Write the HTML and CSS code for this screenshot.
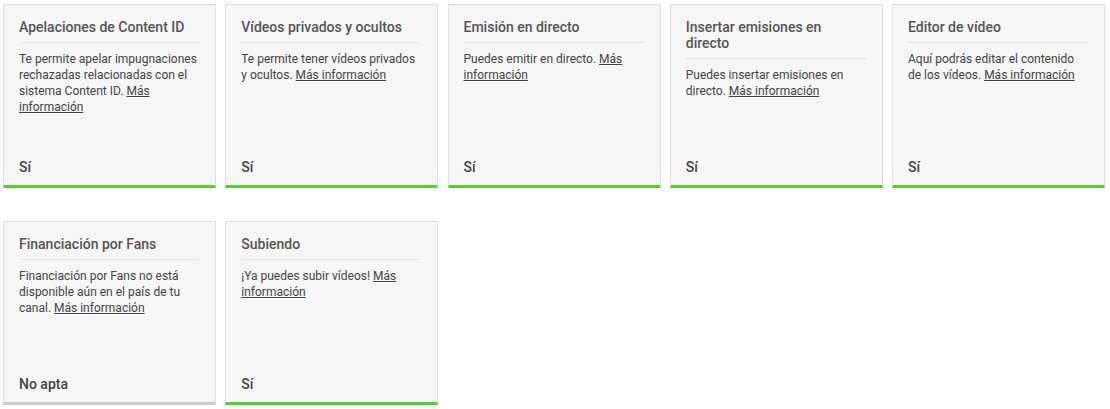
FILE: index.html
```html
<!DOCTYPE html>
<html lang="es">
<head>
<meta charset="utf-8">
<link rel="stylesheet" href="styles.css">
</head>
<body>
<div class="grid">
  <div class="card ok">
    <div class="title">Apelaciones de Content ID</div>
    <div class="desc">Te permite apelar impugnaciones rechazadas relacionadas con el sistema Content ID. <a href="#">Más información</a></div>
    <div class="status">Sí</div>
  </div>
  <div class="card ok">
    <div class="title">Vídeos privados y ocultos</div>
    <div class="desc">Te permite tener vídeos privados y ocultos. <a href="#">Más información</a></div>
    <div class="status">Sí</div>
  </div>
  <div class="card ok">
    <div class="title">Emisión en directo</div>
    <div class="desc">Puedes emitir en directo. <a href="#">Más información</a></div>
    <div class="status">Sí</div>
  </div>
  <div class="card ok">
    <div class="title">Insertar emisiones en directo</div>
    <div class="desc">Puedes insertar emisiones en directo. <a href="#">Más información</a></div>
    <div class="status">Sí</div>
  </div>
  <div class="card ok">
    <div class="title">Editor de vídeo</div>
    <div class="desc">Aquí podrás editar el contenido de los vídeos. <a href="#">Más información</a></div>
    <div class="status">Sí</div>
  </div>
  <div class="card no">
    <div class="title">Financiación por Fans</div>
    <div class="desc">Financiación por Fans no está disponible aún en el país de tu canal. <a href="#">Más información</a></div>
    <div class="status">No apta</div>
  </div>
  <div class="card ok">
    <div class="title">Subiendo</div>
    <div class="desc">¡Ya puedes subir vídeos! <a href="#">Más información</a></div>
    <div class="status">Sí</div>
  </div>
</div>
</body>
</html>
```
FILE: styles.css
```css
html, body {
  margin: 0;
  padding: 0;
  background: #fff;
}
body {
  font-family: Roboto, "Liberation Sans", Arial, sans-serif;
  padding: 4px 0 0 3px;
}
.grid {
  width: 1102px;
  display: grid;
  grid-template-columns: repeat(5, 1fr);
  column-gap: 9.25px;
  row-gap: 33px;
}
.card {
  box-sizing: border-box;
  height: 184px;
  background: #f6f6f6;
  border: 1px solid #e0e0e0;
  border-bottom: 3px solid #52d02e;
  display: flex;
  flex-direction: column;
  padding: 14px 15px 10px 15px;
}
.card.no {
  border-bottom-color: #cdcdcd;
}
.title {
  font-size: 14px;
  line-height: 16px;
  font-weight: 500;
  color: #555;
  padding-bottom: 7px;
  border-bottom: 1px solid #e3e3e3;
  margin-right: 1px;
}
.desc {
  margin-top: 8px;
  font-size: 12px;
  line-height: 16px;
  color: #444;
}
.desc a {
  color: #444;
  text-decoration: underline;
}
.status {
  margin-top: auto;
  font-size: 14px;
  line-height: 16px;
  font-weight: 500;
  color: #444;
}
```
